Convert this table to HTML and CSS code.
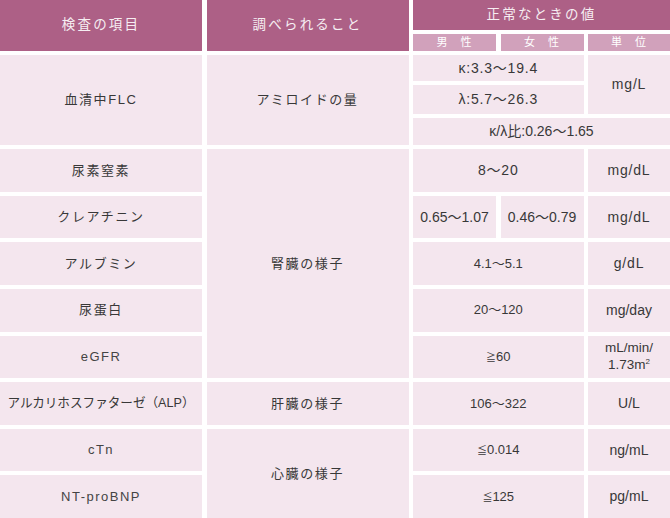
FILE: index.html
```html
<!DOCTYPE html>
<html lang="ja">
<head>
<meta charset="utf-8">
<title>検査の項目</title>
<link rel="stylesheet" href="styles.css">
</head>
<body>
<div class="table">
  <div class="cell head c1 r-h">検査の項目</div>
  <div class="cell head c2 r-h">調べられること</div>
  <div class="cell head c345 r1">正常なときの値</div>
  <div class="cell sub c3 r2">男　性</div>
  <div class="cell sub c4 r2">女　性</div>
  <div class="cell sub c5 r2">単　位</div>

  <div class="cell jp c1 r-flc">血清中FLC</div>
  <div class="cell jp c2 r-flc">アミロイドの量</div>
  <div class="cell num sp c34 r3">κ:3.3〜19.4</div>
  <div class="cell num sp c5 r-mgl">mg/L</div>
  <div class="cell num sp c34 r4">λ:5.7〜26.3</div>
  <div class="cell num c345 r5">κ/λ比:0.26〜1.65</div>

  <div class="cell jp c1 r6">尿素窒素</div>
  <div class="cell jp c2 r-kid">腎臓の様子</div>
  <div class="cell num sp c34 r6">8〜20</div>
  <div class="cell num sp c5 r6">mg/dL</div>

  <div class="cell jp c1 r7">クレアチニン</div>
  <div class="cell num c3 r7">0.65〜1.07</div>
  <div class="cell num c4 r7">0.46〜0.79</div>
  <div class="cell num sp c5 r7">mg/dL</div>

  <div class="cell jp c1 r8">アルブミン</div>
  <div class="cell num sm c34 r8">4.1〜5.1</div>
  <div class="cell num sp c5 r8">g/dL</div>

  <div class="cell jp c1 r9">尿蛋白</div>
  <div class="cell num sm c34 r9">20〜120</div>
  <div class="cell num c5 r9">mg/day</div>

  <div class="cell jp lat c1 r10">eGFR</div>
  <div class="cell num sm c34 r10"><span><span class="sym">≧</span>60</span></div>
  <div class="cell num c5 r10 unit2"><span>mL/min/<br>1.73m<sup>2</sup></span></div>

  <div class="cell jp c1 r11 alp">アルカリホスファターゼ（ALP）</div>
  <div class="cell jp c2 r11">肝臓の様子</div>
  <div class="cell num sm c34 r11">106〜322</div>
  <div class="cell num c5 r11">U/L</div>

  <div class="cell jp lat c1 r12">cTn</div>
  <div class="cell jp c2 r-heart">心臓の様子</div>
  <div class="cell num sm c34 r12"><span><span class="sym">≦</span>0.014</span></div>
  <div class="cell num c5 r12">ng/mL</div>

  <div class="cell jp lat c1 r13">NT-proBNP</div>
  <div class="cell num sm c34 r13"><span><span class="sym">≦</span>125</span></div>
  <div class="cell num c5 r13">pg/mL</div>
</div>
</body>
</html>
```

FILE: styles.css
```css
html, body {
  margin: 0;
  padding: 0;
  background: #ffffff;
}

.table {
  display: grid;
  width: 670px;
  height: 518px;
  grid-template-columns: 202px 202px 83px 83px 82px;
  grid-template-rows: 30px 17px 26px 29px 27px repeat(8, 1fr);
  column-gap: 4.5px;
  row-gap: 4px;
  font-family: "Liberation Sans", "Noto Sans CJK JP", sans-serif;
  color: #383838;
}

.cell {
  display: flex;
  align-items: center;
  justify-content: center;
  text-align: center;
  background: #f4e6ee;
  font-size: 13px;
  line-height: 1.2;
  overflow: hidden;
}

.head {
  background: #ad6086;
  color: #f6eef2;
  font-size: 13.5px;
  letter-spacing: 2.2px;
  font-weight: 400;
}

.sub {
  background: #d1a1bb;
  color: #ffffff;
  font-size: 11px;
  letter-spacing: 1px;
  font-weight: 400;
}

.jp {
  letter-spacing: 1.6px;
  font-weight: 400;
}

.jp.lat {
  font-size: 13px;
  letter-spacing: 1.5px;
  color: #444444;
}

.alp {
  letter-spacing: 0;
  font-size: 12.6px;
}

.num {
  font-size: 14px;
}

.num.sp {
  letter-spacing: 0.8px;
}

.num.sm {
  font-size: 13px;
}

.sym {
  font-size: 10px;
}

.unit2 {
  line-height: 1.25;
  font-size: 13.5px;
}

.unit2 sup {
  font-size: 8px;
  vertical-align: 5px;
  line-height: 0;
}

/* columns */
.c1 { grid-column: 1; }
.c2 { grid-column: 2; }
.c3 { grid-column: 3; }
.c4 { grid-column: 4; }
.c5 { grid-column: 5; }
.c34 { grid-column: 3 / 5; }
.c345 { grid-column: 3 / 6; }

/* rows */
.r-h { grid-row: 1 / 3; }
.r1 { grid-row: 1; }
.r2 { grid-row: 2; }
.r-flc { grid-row: 3 / 6; }
.r3 { grid-row: 3; }
.r4 { grid-row: 4; }
.r-mgl { grid-row: 3 / 5; }
.r5 { grid-row: 5; }
.r6 { grid-row: 6; }
.r-kid { grid-row: 6 / 11; }
.r7 { grid-row: 7; }
.r8 { grid-row: 8; }
.r9 { grid-row: 9; }
.r10 { grid-row: 10; }
.r11 { grid-row: 11; }
.r12 { grid-row: 12; }
.r-heart { grid-row: 12 / 14; }
.r13 { grid-row: 13; }
```
